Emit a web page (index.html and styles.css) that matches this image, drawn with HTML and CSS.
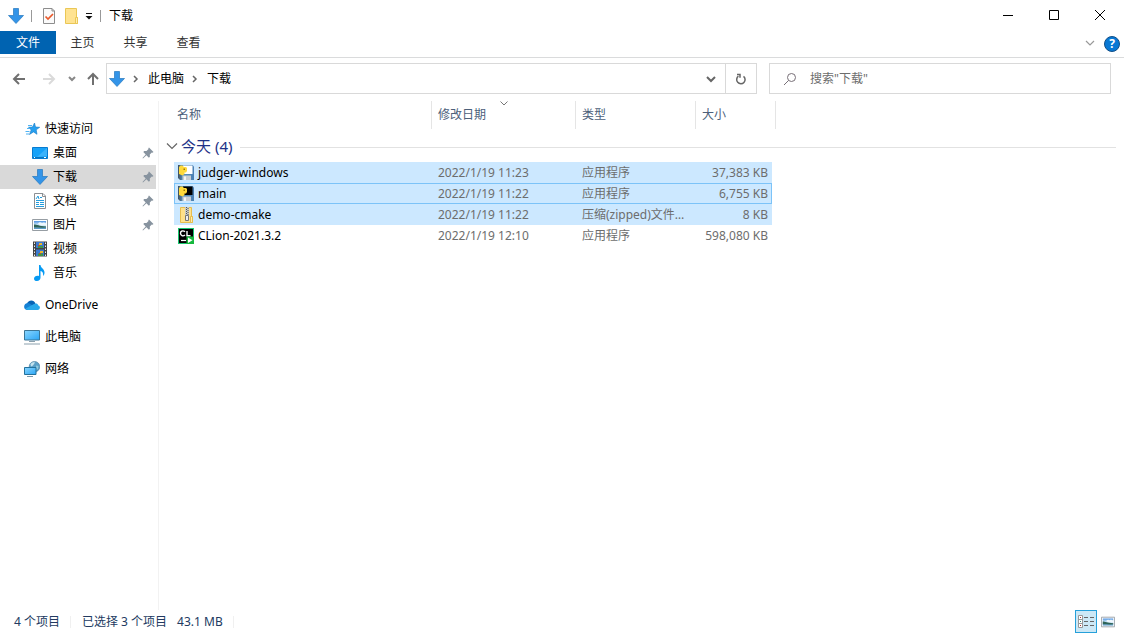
FILE: index.html
```html
<!DOCTYPE html>
<html lang="zh-CN">
<head>
<meta charset="utf-8">
<meta name="viewport" content="width=device-width, initial-scale=1">
<title>下载</title>
<link rel="stylesheet" href="styles.css">
</head>
<body>
<svg class="sprite" aria-hidden="true">
  <defs>
    <linearGradient id="sky" x1="0" y1="0" x2="1" y2="1"><stop offset="0" stop-color="#8ad6ff"/><stop offset="1" stop-color="#2aa5f5"/></linearGradient>
    <linearGradient id="photo" x1="0" y1="0" x2="0" y2="1"><stop offset="0" stop-color="#4f93e0"/><stop offset=".5" stop-color="#d4eafa"/><stop offset="1" stop-color="#4a8fc0"/></linearGradient>
    <linearGradient id="disk" x1="0" y1="0" x2="1" y2="0"><stop offset="0" stop-color="#3c4f60"/><stop offset=".3" stop-color="#5b8fba"/><stop offset="1" stop-color="#4a80b4"/></linearGradient>
  </defs>
  <symbol id="down" viewBox="0 0 16 16"><path d="M5.5.5h5v7h5L8 15.500.5 7.500h5z" fill="#3394e8" stroke="#2477bd" stroke-width=".7"/></symbol>
  <symbol id="pin" viewBox="0 0 12 12"><path d="M7 .5 11.500 5l-1 .8-.7-.2-2 2 .1 2.200-1 .9-2.500-2.500L1 11.500l-.5-.5 3.200-3.400L1.300 5l.9-1 2.300.1 2-2-.2-.8z" fill="#87939f"/></symbol>
  <symbol id="picture" viewBox="0 0 16 16"><path d="M.5 2.500h15v11H.5z" fill="#fff" stroke="#969da3"/><path d="M2 4h12v8H2z" fill="url(#photo)"/><path d="M6 6.500c1-1.500 3-1.500 4-.5 1-1 3-.5 4 .5v2H8z" fill="#eef7fd"/><path d="M2 7.500c3 0 5 1.500 12 2v1c-5 .5-8 0-12 0z" fill="#2f6457"/></symbol>
  <symbol id="python" viewBox="0 0 16 16"><path d="M0 0h14.500L16 1.500V15H2L0 13z" fill="url(#disk)"/><path class="label" d="M5 .5h9.500V9H5z"/><path d="M4.500 10.500H13V15H4.500z" fill="#c9ced3"/><path d="M6 11.500h2V15H6z" fill="#f4f5f5"/><path d="M1 2 2.500.5h2L6 2h2l1 1v3L8 7.500H6.500V9L4.500 10.500 1 9z" fill="#ffd93a"/><path d="M5.500 3.500H7V5H5.500z" fill="#a07800"/></symbol>
</svg>

<div class="window">
  <header>
    <div class="titlebar">
      <div class="quick">
        <svg class="icon"><use href="#down"/></svg>
        <span class="bar"></span>
        <button class="plain check" aria-label="属性"><svg class="icon" viewBox="0 0 16 16"><path d="M2.500.5h8.500l2.500 2.500v12.500h-11z" fill="#fafafa" stroke="#8d8d8d"/><path d="M11 .5V3h2.500" fill="none" stroke="#8d8d8d"/><path d="m4.500 8.500 2.500 2.500L12 6" fill="none" stroke="#e9592b" stroke-width="1.700"/></svg></button>
        <button class="plain" aria-label="新建文件夹"><svg class="icon" viewBox="0 0 16 16"><path d="M2.500.5h11v9h1v6h-12z" fill="#ffe391" stroke="#eac755"/><path d="M12.500 9.500h2v6h-2z" fill="#ffeeb5" stroke="#eac755"/></svg></button>
        <button class="plain more" aria-label="自定义快速访问工具栏"><svg viewBox="0 0 8 8"><path d="M1 1.500h6" stroke="#111"/><path d="M.5 4h7L4 7.500z" fill="#111"/></svg></button>
        <span class="bar"></span>
        <h1>下载</h1>
      </div>
      <div class="controls">
        <button aria-label="最小化"><svg viewBox="0 0 12 12"><path d="M1 6.500h10"/></svg></button>
        <button aria-label="最大化"><svg viewBox="0 0 12 12"><path d="M1.500 1.500h9v9h-9z"/></svg></button>
        <button aria-label="关闭"><svg viewBox="0 0 12 12"><path d="m1 1 10 10M11 1 1 11"/></svg></button>
      </div>
    </div>
    <div class="tabs">
      <button class="file">文件</button><button>主页</button><button>共享</button><button>查看</button>
      <button class="plain expand" aria-label="展开功能区"><svg viewBox="0 0 10 10"><path d="m1 3 4 4 4-4" fill="none" stroke="#999" stroke-width="1.200"/></svg></button>
      <button class="plain help" aria-label="帮助">?</button>
    </div>
  </header>

  <div class="navbar">
    <div class="moves">
      <button class="plain" aria-label="后退"><svg viewBox="0 0 14 14"><path d="M13 7H2M7 2 2 7l5 5" stroke="#707070"/></svg></button>
      <button class="plain" aria-label="前进" disabled><svg viewBox="0 0 14 14"><path d="M1 7h11M7 2l5 5-5 5" stroke="#dadada"/></svg></button>
      <button class="plain recent" aria-label="最近浏览的位置"><svg viewBox="0 0 8 8"><path d="m1 2 3 3 3-3" stroke="#888"/></svg></button>
      <button class="plain" aria-label="上移"><svg viewBox="0 0 14 14"><path d="M7 13V2M2 7l5-5 5 5" stroke="#707070"/></svg></button>
    </div>
    <div class="address">
      <nav class="crumbs" aria-label="地址">
        <svg class="icon"><use href="#down"/></svg>
        <svg class="sep" viewBox="0 0 8 8"><path d="m2 1 3 3-3 3"/></svg>
        <a href="#">此电脑</a>
        <svg class="sep" viewBox="0 0 8 8"><path d="m2 1 3 3-3 3"/></svg>
        <a href="#">下载</a>
      </nav>
      <button class="plain history" aria-label="以前的位置"><svg viewBox="0 0 10 10"><path d="m1 3 4 4 4-4"/></svg></button>
      <button class="plain refresh" aria-label="刷新"><svg viewBox="0 0 12 12"><path d="M8.500 3.300A4.200 4.200 0 1 1 3.400 3.200M2 1.500h3v3.300"/></svg></button>
    </div>
    <label class="search">
      <svg viewBox="0 0 14 14" aria-hidden="true"><circle cx="8.500" cy="5.500" r="4"/><path d="m5.500 8.500-4.500 4.500"/></svg>
      <input type="search" aria-label="搜索下载" placeholder='搜索"下载"'>
    </label>
  </div>

  <div class="body">
    <nav class="sidebar" aria-label="导航窗格">
      <a class="top quickaccess" href="#"><svg class="icon" viewBox="0 0 16 16"><path d="m10.500 2 1 4 4.200.3-3.500 2.500.8 4.500-3.500-2.400-4 2.600 1.700-4.600L4.500 6.300l4-.3z" fill="#26a0f0" stroke="#1679c4" stroke-width=".6"/><path d="M4 4.500h4M3 7.500h3M1.500 10.500h4M2 13h3" stroke="#4fb3f3"/></svg><span>快速访问</span></a>
      <a href="#"><svg class="icon" viewBox="0 0 16 16"><path d="M.5 2.500h15v11H.5z" fill="#17a2f8" stroke="#087bd0"/><path d="M15 3v8L5 12z" fill="#3cb3fb"/><path d="M1 12.500h14" stroke="#0876bf"/><path d="M2 12.500h1m9 0h2" stroke="#fff"/></svg><span>桌面</span><svg class="pin"><use href="#pin"/></svg></a>
      <a class="current" href="#" aria-current="page"><svg class="icon"><use href="#down"/></svg><span>下载</span><svg class="pin"><use href="#pin"/></svg></a>
      <a href="#"><svg class="icon" viewBox="0 0 16 16"><path d="M2.500.5h8.500l2.500 2.500v12.500h-11z" fill="#fff" stroke="#8b8f93"/><path d="M10.500.5v3h3" fill="none" stroke="#8b8f93"/><path d="m4 6 2-3 1 3m1-1.500h2M4 7.500h8m-8 2h3m1 0h4m-8 2h3m1 0h4m-8 2h8" fill="none" stroke="#249ddd"/></svg><span>文档</span><svg class="pin"><use href="#pin"/></svg></a>
      <a href="#"><svg class="icon"><use href="#picture"/></svg><span>图片</span><svg class="pin"><use href="#pin"/></svg></a>
      <a href="#"><svg class="icon" viewBox="0 0 16 16"><path d="M1 .5h14v15H1z" fill="#444"/><path d="M4 1h8v6H4zm0 7.500h8V15H4z" fill="#3b78cf"/><path d="M6 5h5v2H6zm0 7.500h5V15H6z" fill="#419445"/><path d="M7 2h3v2H7zm1 8h3v2H8z" fill="#e8b52c"/><path d="M6 4h2v1H6zm1 8h2v1H7z" fill="#d44326"/><path d="M2.500 1.500V15M13.500 1.500V15" stroke="#eee" stroke-dasharray="1.500 1.500"/></svg><span>视频</span></a>
      <a href="#"><svg class="icon" viewBox="0 0 16 16"><path d="M7 0h1.500c.2 3 4 3.800 4 7.500 0 1.500-.5 2.500-1.500 3.500.6-3-.5-4.500-2.500-5v6.500C8.500 14.500 7 16 5 16c-1.700 0-3-.8-3-2.300 0-1.700 1.700-3 3.500-3 .6 0 1 .1 1.500.3z" fill="#069af3"/></svg><span>音乐</span></a>
      <a class="top" href="#"><svg class="icon" viewBox="0 0 16 16"><path d="M3 7C3.500 3.500 9.500 1.500 11.500 6.500L7 11z" fill="#0763b5"/><path d="M3.500 6c2 0 4 1.500 7.500 4.500l-5 2.500H3.500C-1 13-1 6.500 3.500 6z" fill="#1681d4"/><path d="M10 7c1.500-1 4-.6 4.300 1.500 2.400.4 2.200 4.500-.8 4.500H4.300c-1.300 0-2.300-.6-2.800-1.400z" fill="#28a8ea"/></svg><span>OneDrive</span></a>
      <a class="top" href="#"><svg class="icon" viewBox="0 0 16 16"><path d="M.5 1.500h15v9.500H.5z" fill="url(#sky)" stroke="#3c7595"/><path d="M5 12.500h6M0 15h16" stroke="#8ba0ad"/></svg><span>此电脑</span></a>
      <a class="top" href="#"><svg class="icon" viewBox="0 0 16 16"><circle cx="10.500" cy="5.700" r="5.300" fill="#5a9fc6" stroke="#41799b" stroke-width=".6"/><path d="M6.500 3c1.500-2 3.500-2 4.500-1.500L9 4.500 7 5.500z" fill="#c5e3ee"/><path d="M12 4.500l2.500.5-.5 3-2 1z" fill="#8cc8df"/><path d="M.5 6.500h11.500v7H.5z" fill="url(#sky)" stroke="#23719c"/><path d="M3 15.500h6" stroke="#7c99a9"/></svg><span>网络</span></a>
    </nav>

    <main>
      <table>
        <colgroup><col class="c-gutter"><col class="c-name"><col class="c-date"><col class="c-type"><col class="c-size"><col class="c-edge"><col></colgroup>
        <thead>
          <tr><td></td><th scope="col" class="first">名称</th><th scope="col" class="sorted">修改日期<svg viewBox="0 0 8 5"><path d="m.5.5 3.500 3.500L7.500.5"/></svg></th><th scope="col">类型</th><th scope="col">大小</th><td class="edge"></td><td></td></tr>
        </thead>
        <tbody>
          <tr class="group"><th colspan="7" scope="rowgroup"><div><svg viewBox="0 0 12 12"><path d="m1 3.500 5 5 5-5"/></svg><span>今天 (4)</span><i></i></div></th></tr>
          <tr class="row selected"><td></td><td><div class="name"><svg class="icon white"><use href="#python"/></svg>judger-windows</div></td><td>2022/1/19 11:23</td><td>应用程序</td><td>37,383 KB</td><td></td><td></td></tr>
          <tr class="row selected focused"><td></td><td><div class="name"><svg class="icon black"><use href="#python"/></svg>main</div></td><td>2022/1/19 11:22</td><td>应用程序</td><td>6,755 KB</td><td></td><td></td></tr>
          <tr class="row selected"><td></td><td><div class="name"><svg class="icon" viewBox="0 0 16 16"><path d="M2.500.5h11v9h1v6h-12z" fill="#ffe18a" stroke="#e6bd4f"/><path d="M12.500 9.500h2v6h-2z" fill="#ffedb0" stroke="#e6bd4f"/><path d="M7 0h4v12H7z" fill="#c9cbc6"/><path d="M8.500 0v8M10 1v7" stroke="#555" stroke-dasharray="1 1"/><path d="M7.500 8.500h3v5h-3z" fill="#eee" stroke="#777"/></svg>demo-cmake</div></td><td>2022/1/19 11:22</td><td>压缩(zipped)文件夹</td><td>8 KB</td><td></td><td></td></tr>
          <tr class="row"><td></td><td><div class="name"><svg class="icon" viewBox="0 0 16 16"><path d="M0 0h16v16H0z" fill="#19c66f"/><path d="M1 1h14v14H1z" fill="#000"/><path d="M7 3.800C5 2 2.500 3 2.500 5.300S5 8.700 7 7M9 3v4.700h3.500" fill="none" stroke="#fff" stroke-width="1.400"/><path d="M3 12.500h5" stroke="#fff" stroke-width="1.200"/><path d="M8.500 8.500H16V16H8.500z" fill="#15b83d"/><path d="m10 9.500 4.500 2.700L10 15z" fill="#fff"/></svg>CLion-2021.3.2</div></td><td>2022/1/19 12:10</td><td>应用程序</td><td>598,080 KB</td><td></td><td></td></tr>
        </tbody>
      </table>
    </main>
  </div>

  <footer>
    <span class="count">4 个项目</span>
    <span class="chosen">已选择 3 个项目</span>
    <span class="total">43.1 MB</span>
    <div class="views">
      <button class="plain active" aria-label="详细信息"><svg viewBox="0 0 16 14"><path d="M.5.5h4v12h-4zM.5 4.500h4M.5 8.500h4" fill="#fff" stroke="#999"/><path d="M2 2.500h1m-1 8h1" stroke="#a33"/><path d="M2 6.500h1" stroke="#387"/><path d="M6 2.500h4m2 0h4m-10 4h4m2 0h4m-10 4h4m2 0h4" stroke="#666"/></svg></button>
      <button class="plain" aria-label="大缩略图"><svg class="thumb"><use href="#picture"/></svg></button>
    </div>
  </footer>
</div>
</body>
</html>
```

FILE: styles.css
```css
* { box-sizing: border-box; }

body {
  margin: 0;
  background: #fff;
  color: #000;
  font: 12px/16px "Noto Sans", "Noto Sans CJK SC", sans-serif;
}

button, input { font: inherit; color: inherit; }
button { padding: 0; border: 0; background: none; }
a { color: inherit; text-decoration: none; }
svg { display: block; flex: none; }

.sprite { position: absolute; width: 0; height: 0; }
.icon { width: 16px; height: 16px; }
.plain { display: flex; align-items: center; justify-content: center; }

.window { display: flex; flex-direction: column; min-height: 100vh; }

/* Title bar */
.titlebar { display: flex; justify-content: space-between; height: 31px; }
.quick { display: flex; align-items: center; padding-left: 8px; }
.quick .bar { width: 1px; height: 12px; margin-left: 7px; background: #999; }
.quick .check { margin: 0 6px 0 9px; }
.quick .more { margin-left: 6px; }
.more svg { width: 8px; height: 8px; }
.quick h1 { margin: 0 0 0 8px; font-size: 12px; font-weight: 400; }
.controls { display: flex; padding: 0 1px 1px 0; }
.controls button { display: flex; align-items: center; justify-content: center; width: 46px; }
.controls svg { width: 12px; height: 12px; fill: none; stroke: #000; }

/* Ribbon tabs */
.tabs { display: flex; height: 27px; padding-bottom: 3px; border-bottom: 1px solid #dadbdc; color: #333; }
.tabs button { width: 53px; padding-top: 1px; }
.tabs .file { width: 56px; background: #0063b1; color: #fff; }
.tabs .expand { width: 24px; margin-left: auto; }
.expand svg { width: 10px; height: 10px; }
.tabs .help {
  align-self: center;
  width: 16px;
  height: 16px;
  margin: 2px 4px 0 2px;
  padding: 0;
  border: 1px solid #124f87;
  border-radius: 50%;
  background: #0878d4;
  color: #fff;
  font-weight: 700;
}

/* Navigation row */
.navbar { display: flex; height: 43px; padding: 5px 13px 7px 12px; }
.moves { display: flex; align-items: center; width: 94px; }
.moves svg { width: 14px; height: 14px; fill: none; stroke-width: 2; }
.moves button + button { margin-left: 16px; }
.moves .recent { margin-left: 12px; }
.moves button + .recent { margin-left: 12px; }
.moves .recent svg { width: 8px; height: 8px; }
.moves .recent + button { margin-left: 10px; }
.address { display: flex; flex: 1; border: 1px solid #d9d9d9; }
.crumbs { display: flex; flex: 1; align-items: center; padding-left: 2px; }
.crumbs .sep { width: 8px; height: 8px; margin: 0 8px 0 7px; fill: none; stroke: #666; stroke-width: 1.5; }
.history { width: 28px; }
.history svg { width: 10px; height: 10px; fill: none; stroke: #666; stroke-width: 2; }
.refresh { width: 31px; border-left: 1px solid #d9d9d9; }
.refresh svg { width: 12px; height: 12px; fill: none; stroke: #666; stroke-width: 1.5; }
.search { display: flex; align-items: center; width: 342px; margin-left: 12px; padding-left: 13px; border: 1px solid #d9d9d9; }
.search svg { width: 14px; height: 14px; fill: none; stroke: #776f77; }
.search input { flex: 1; min-width: 0; margin-left: 13px; padding: 0; border: 0; outline: 0; background: none; }
.search input::placeholder { color: #6d6d6d; opacity: 1; }

/* Main area */
.body { display: flex; flex: 1; }
.sidebar { width: 159px; padding: 16px 2px 0 0; border-right: 1px solid #f2f2f2; }
.sidebar a { display: flex; align-items: center; gap: 5px; height: 24px; padding: 0 2px 0 32px; }
.sidebar .top { margin-top: 8px; padding-left: 24px; }
.sidebar .quickaccess { margin-top: 0; }
.sidebar .current { background: #d9d9d9; }
.sidebar .pin { width: 12px; height: 12px; margin-left: auto; }

main { flex: 1; min-width: 0; padding: 0 8px 0 7px; }
table { width: 100%; table-layout: fixed; border-collapse: separate; border-spacing: 0; color: #6d6d6d; }
.c-gutter { width: 8px; }
.c-name { width: 257px; }
.c-date { width: 144px; }
.c-type { width: 120px; }
.c-size { width: 77px; }
.c-edge { width: 4px; }
th, td { padding: 0; font-weight: 400; text-align: left; white-space: nowrap; }
thead th { position: relative; height: 28px; padding-left: 6px; border-left: 1px solid #e5e5e5; color: #4c607a; }
thead .first { padding-left: 3px; border: 0; }
thead .edge { border-right: 1px solid #e5e5e5; }
.sorted svg { position: absolute; top: 0; left: 50%; width: 8px; height: 5px; margin-left: -4px; fill: none; stroke: #777; }

.group div { display: flex; align-items: center; height: 33px; padding-top: 1px; color: #1e3287; font-size: 15px; line-height: 20px; }
.group svg { width: 12px; height: 12px; margin-right: 3px; fill: none; stroke: #666; stroke-width: 1.2; }
.group i { flex: 1; height: 1px; margin: 2px 0 0 8px; background: #e2e2e2; }

.row td { height: 21px; overflow: hidden; padding: 0 9px 0 7px; text-overflow: ellipsis; }
.row td:first-child, .row td:nth-child(n+6) { padding: 0; }
.row td:nth-child(2) { padding: 0 4px; color: #000; }
.row td:nth-child(5) { padding: 0 4px 0 0; text-align: right; }
.name { display: flex; align-items: center; gap: 4px; }
.white { color: #fff; }
.black { color: #000; }
.label { fill: currentColor; }
.selected td:nth-child(n+2):nth-child(-n+5) { background: #cce8ff; }
.focused td:nth-child(n+2):nth-child(-n+5) { box-shadow: inset 0 1px #7cc3f8, inset 0 -1px #7cc3f8; }
.focused td:nth-child(n+2):nth-child(2) { box-shadow: inset 1px 0 #7cc3f8, inset 0 1px #7cc3f8, inset 0 -1px #7cc3f8; }
.focused td:nth-child(n+2):nth-child(5) { box-shadow: inset -1px 0 #7cc3f8, inset 0 1px #7cc3f8, inset 0 -1px #7cc3f8; }

/* Status bar */
footer { display: flex; align-items: center; height: 24px; padding: 0 5px 0 14px; color: #223a61; }
footer .count { padding-right: 10px; border-right: 1px solid #f0f0f0; line-height: 12px; }
footer .chosen { padding-left: 11px; }
footer .total { margin-left: 10px; padding-right: 10px; border-right: 1px solid #f0f0f0; line-height: 12px; }
.views { display: flex; align-self: stretch; margin-left: auto; }
.views button { width: 22px; height: 23px; }
.views .active { border: 1px solid #26a0da; background: #cce8f6; }
.views svg { width: 16px; height: 14px; }
.views .thumb { width: 14px; height: 14px; }
```
